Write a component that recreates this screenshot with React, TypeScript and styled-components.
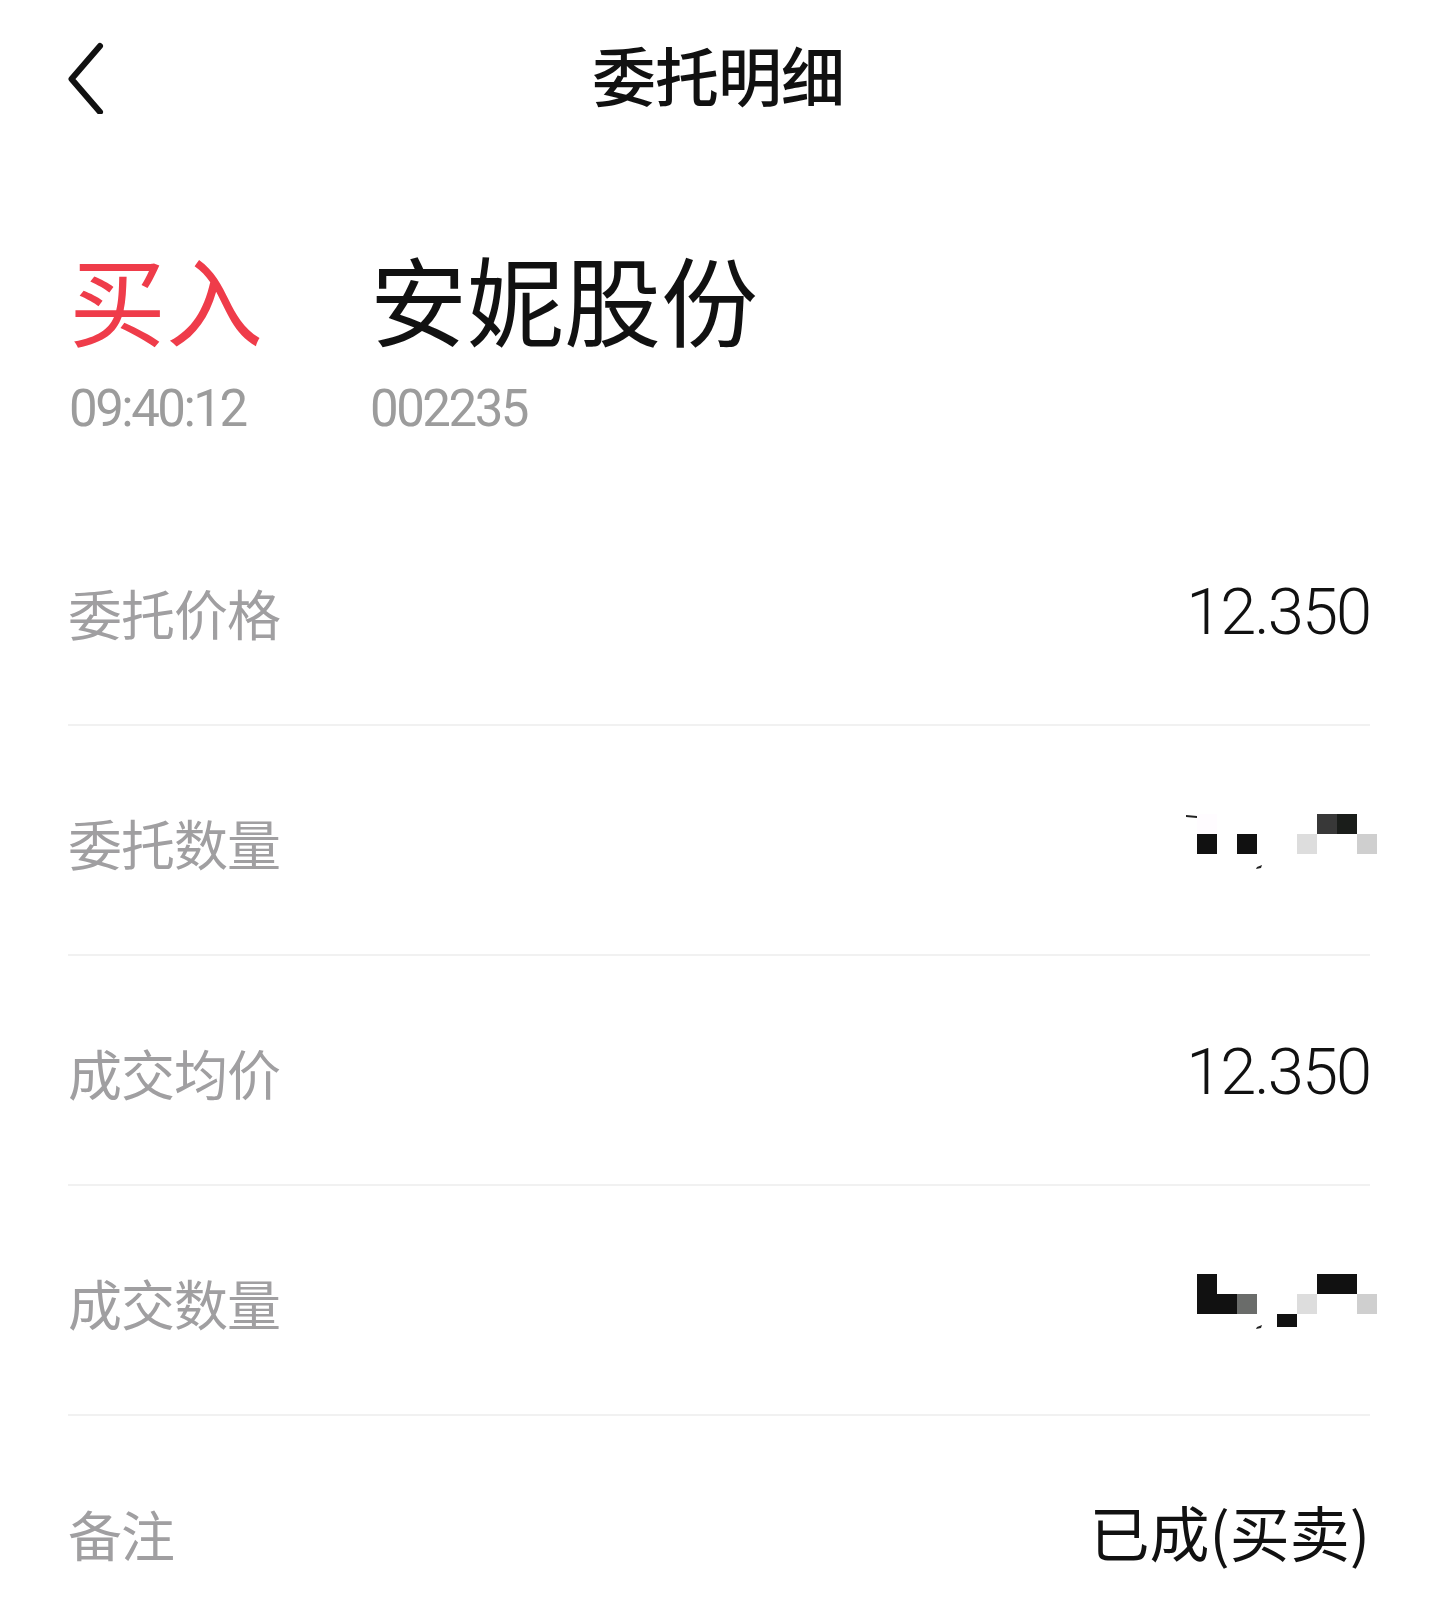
import React from "react"
import styled, { createGlobalStyle } from "styled-components"

const GlobalStyle = createGlobalStyle`
  html, body {
    margin: 0;
    padding: 0;
    background: #ffffff;
  }
  body {
    font-family: "Noto Sans CJK SC", "Noto Sans", sans-serif;
    color: #111111;
  }
`

const Page = styled.div`
  width: 1436px;
  min-height: 1614px;
  background: #ffffff;
  overflow: hidden;
`

const NavBar = styled.header`
  height: 148px;
  display: grid;
  grid-template-columns: 1fr auto 1fr;
  align-items: center;
  padding: 0 67px;
`

const BackButton = styled.button`
  justify-self: start;
  width: 40px;
  height: 80px;
  padding: 0;
  border: none;
  background: none;
  cursor: pointer;
  display: flex;
`

const Title = styled.h1`
  margin: 0 0 2px;
  font-size: 64px;
  line-height: 1;
  font-weight: 500;
  color: #111111;
  letter-spacing: -1px;
`

const Summary = styled.section`
  display: grid;
  grid-template-columns: 301px 1fr;
  padding: 100px 69px 62px;
`

const SummaryCol = styled.div`
  display: flex;
  flex-direction: column;
  gap: 38px;
`

const BigText = styled.div<{ $color: string }>`
  font-size: 97px;
  line-height: 1;
  font-weight: 400;
  color: ${(p) => p.$color};
  white-space: nowrap;
`

const SubText = styled.div`
  font-family: Roboto, "Noto Sans", sans-serif;
  font-size: 51px;
  line-height: 1;
  font-weight: 400;
  color: #9c9c9c;
  letter-spacing: -2.5px;
`

const List = styled.div`
  padding: 0 66px 0 68px;
`

const Row = styled.div`
  box-sizing: border-box;
  height: 230px;
  display: flex;
  align-items: center;
  justify-content: space-between;
  border-bottom: 2px solid #f1f1f1;
  &:last-child {
    border-bottom: none;
  }
`

const Label = styled.span`
  margin-top: 6px;
  font-size: 54px;
  line-height: 1;
  color: #a09fa1;
  letter-spacing: -1px;
`

const NumberValue = styled.span`
  margin-top: 4px;
  font-family: Roboto, "Noto Sans", sans-serif;
  font-size: 65px;
  line-height: 1;
  font-weight: 300;
  color: #111111;
  letter-spacing: -2px;
`

const TextValue = styled.span`
  font-size: 60px;
  line-height: 1;
  color: #111111;
`

const MosaicSvg = styled.svg`
  display: block;
  margin-right: -8px;
`

type Cell = [number, number, string, number?]

const quantityCells: Cell[] = [
  [0, 0, "#fffcff"],
  [0, 1, "#111111"],
  [2, 1, "#111111"],
  [5, 1, "#dddddd"],
  [6, 0, "#383838"],
  [7, 0, "#1a1d1a"],
  [8, 1, "#cfcfcf"],
]

const filledCells: Cell[] = [
  [0, 0, "#111111"],
  [0, 1, "#111111"],
  [1, 1, "#111111"],
  [2, 1, "#6a6c6a"],
  [4, 2, "#111111", 13],
  [5, 1, "#dddddd"],
  [6, 0, "#111111"],
  [7, 0, "#111111"],
  [8, 1, "#cfcfcf"],
]

function Mosaic({ cells, tick }: { cells: Cell[]; tick?: boolean }) {
  return (
    <MosaicSvg width="195" height="62" viewBox="0 0 195 62">
      {cells.map(([c, r, fill, h], i) => (
        <rect key={i} x={14 + c * 20} y={5 + r * 20} width="20" height={h ?? 20} fill={fill} />
      ))}
      {tick && <path d="M3 6 L14 7 L14 9 L3 8 Z" fill="#222" />}
      <path d="M74 58 L79 56 L78 59 L73 60 Z" fill="#222" />
    </MosaicSvg>
  )
}

function ChevronLeft() {
  return (
    <svg width="40" height="80" viewBox="0 0 40 80" fill="none">
      <path d="M33 12 L4.5 45 L33 78" stroke="#111" strokeWidth="6" strokeLinecap="round" strokeLinejoin="round" />
    </svg>
  )
}

export default function App() {
  return (
    <Page>
      <GlobalStyle />
      <NavBar>
        <BackButton aria-label="返回">
          <ChevronLeft />
        </BackButton>
        <Title>委托明细</Title>
        <span />
      </NavBar>

      <Summary>
        <SummaryCol>
          <BigText $color="#ef3c4a">买入</BigText>
          <SubText>09:40:12</SubText>
        </SummaryCol>
        <SummaryCol>
          <BigText $color="#111111">安妮股份</BigText>
          <SubText>002235</SubText>
        </SummaryCol>
      </Summary>

      <List>
        <Row>
          <Label>委托价格</Label>
          <NumberValue>12.350</NumberValue>
        </Row>
        <Row>
          <Label>委托数量</Label>
          <Mosaic cells={quantityCells} tick />
        </Row>
        <Row>
          <Label>成交均价</Label>
          <NumberValue>12.350</NumberValue>
        </Row>
        <Row>
          <Label>成交数量</Label>
          <Mosaic cells={filledCells} />
        </Row>
        <Row>
          <Label>备注</Label>
          <TextValue>已成(买卖)</TextValue>
        </Row>
      </List>
    </Page>
  )
}
